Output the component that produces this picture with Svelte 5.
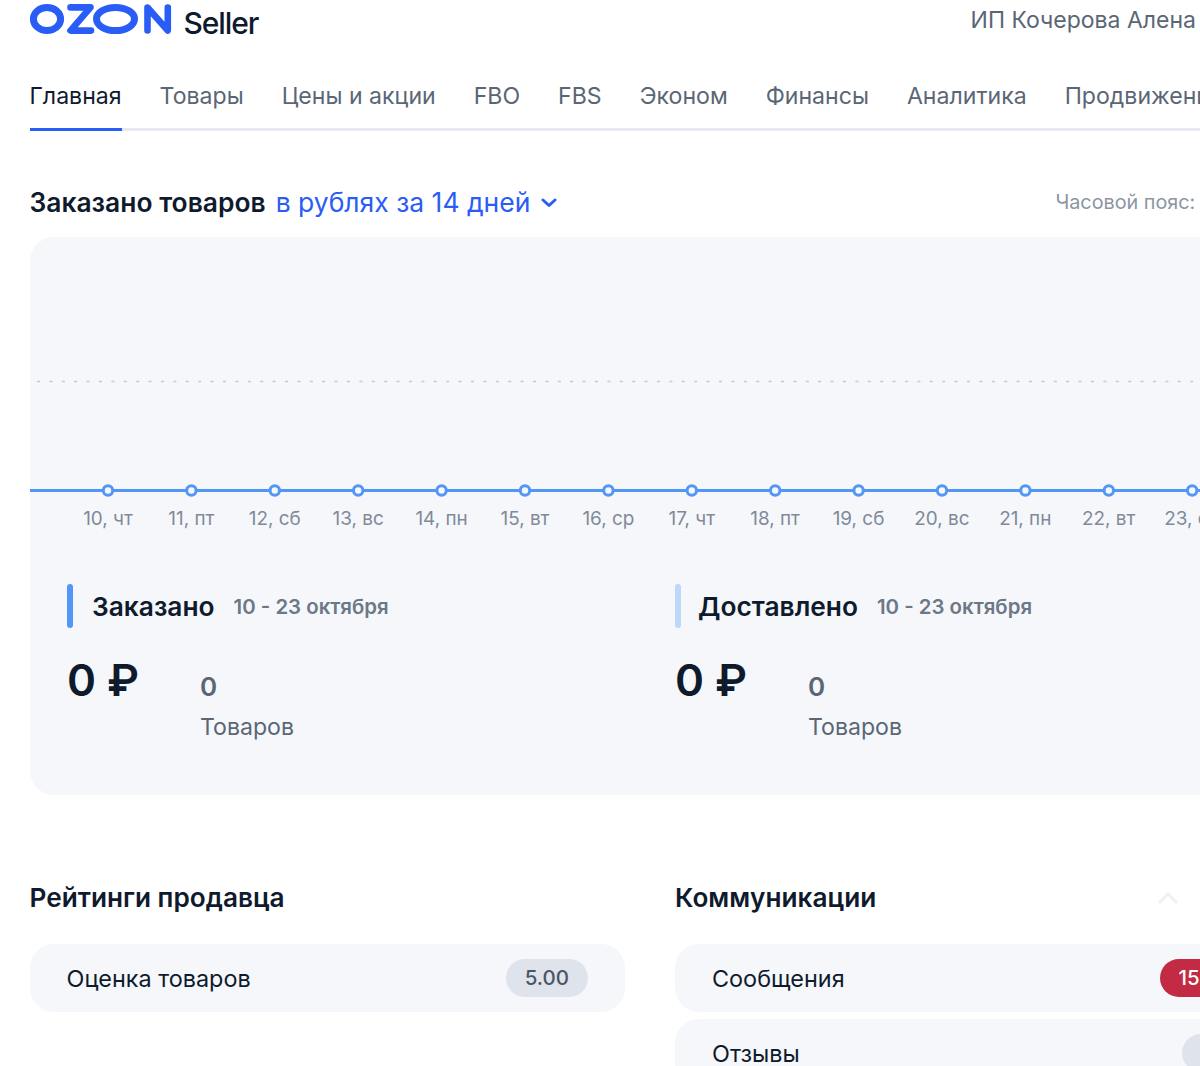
<script>
  const tabs = ['Главная', 'Товары', 'Цены и акции', 'FBO', 'FBS', 'Эконом', 'Финансы', 'Аналитика', 'Продвижение'];
  const days = ['10, чт', '11, пт', '12, сб', '13, вс', '14, пн', '15, вт', '16, ср', '17, чт', '18, пт', '19, сб', '20, вс', '21, пн', '22, вт', '23, ср'];
  const totals = [
    { title: 'Заказано', color: '#5297f5' },
    { title: 'Доставлено', color: '#bcd8fb' }
  ];
  const step = 83.4;
</script>

<div class="page">
  <header class="top">
    <div class="brand">
      <svg class="logo" width="143" height="30" viewBox="0 0 143 30" fill="none" aria-label="OZON">
        <ellipse cx="17" cy="15" rx="13.600" ry="11.500" stroke="#2a5cf6" stroke-width="7" />
        <path d="M40.500 3.400h20L40.500 26.600h20.500" stroke="#2a5cf6" stroke-width="6.600" stroke-linecap="round" stroke-linejoin="round" />
        <ellipse cx="85.500" cy="15" rx="19" ry="11.500" stroke="#2a5cf6" stroke-width="7" />
        <path d="M117.500 26.500V3.500L137.800 26.500V3.500" stroke="#2a5cf6" stroke-width="6.600" stroke-linecap="round" stroke-linejoin="round" />
      </svg>
      <span class="seller">Seller</span>
    </div>
    <span class="user">ИП Кочерова Алена</span>
  </header>

  <nav class="tabs">
    {#each tabs as tab, i}
      <span class="tab" class:active={i === 0}>{tab}</span>
    {/each}
  </nav>

  <div class="heading">
    <h2>Заказано товаров</h2>
    <span class="period">в рублях за 14 дней</span>
    <svg class="chevron" width="16" height="10" viewBox="0 0 16 10" fill="none">
      <path d="M2 2l6 5.500L14 2" stroke="#2a5cf6" stroke-width="3" stroke-linecap="round" stroke-linejoin="round" />
    </svg>
    <span class="tz">Часовой пояс:</span>
  </div>

  <section class="chart-card">
    <svg class="chart" width="1230" height="250" viewBox="0 0 1230 250" fill="none">
      <line x1="7" y1="144.500" x2="1230" y2="144.500" stroke="#c4cad4" stroke-width="1.600" stroke-dasharray="3 9.400" />
      <line x1="0" y1="253.500" x2="1230" y2="253.500" stroke="#5297f5" stroke-width="3" />
      {#each days as _, i}
        <circle cx={78 + i * step} cy="253.500" r="4.700" fill="#f5f7fb" stroke="#5297f5" stroke-width="3" />
      {/each}
    </svg>
    <div class="days">
      {#each days as day}
        <span class="day">{day}</span>
      {/each}
    </div>

    <div class="totals">
      {#each totals as t}
        <div class="total">
          <div class="total-head">
            <i class="mark" style="background:{t.color}"></i>
            <b>{t.title}</b>
            <span class="range">10 - 23 октября</span>
          </div>
          <div class="total-body">
            <span class="sum">0 ₽</span>
            <div class="count">
              <strong>0</strong>
              <span>Товаров</span>
            </div>
          </div>
        </div>
      {/each}
    </div>
  </section>

  <div class="columns">
    <section>
      <h3>Рейтинги продавца</h3>
      <div class="row">
        <span>Оценка товаров</span>
        <em class="pill">5.00</em>
      </div>
    </section>
    <section>
      <div class="col-head">
        <h3>Коммуникации</h3>
        <svg width="20" height="12" viewBox="0 0 20 12" fill="none">
          <path d="M2 10l8-8 8 8" stroke="#edf0f5" stroke-width="3" stroke-linecap="round" stroke-linejoin="round" />
        </svg>
      </div>
      <div class="row">
        <span>Сообщения</span>
        <em class="pill red">15</em>
      </div>
      <div class="row second">
        <span>Отзывы</span>
        <em class="pill">0</em>
      </div>
    </section>
  </div>
</div>

<style>
  :global(body) {
    overflow: hidden;
  }

  .page {
    width: 1200px;
    height: 1066px;
    overflow: hidden;
    box-sizing: border-box;
    padding-left: 29.500px;
    background: #fff;
    color: #0f1b2d;
    font-family: Inter, "Noto Sans", sans-serif;
  }

  .top {
    display: flex;
    justify-content: space-between;
    height: 64px;
    width: 1166.500px;
  }

  .brand {
    display: flex;
    align-items: flex-start;
    margin-top: 4px;
  }

  .seller {
    margin-left: 11px;
    font-size: 30px;
    line-height: 38px;
    font-weight: 500;
    letter-spacing: -1.100px;
  }

  .user {
    font-size: 23px;
    line-height: 40px;
    color: #5a6675;
  }

  .tabs {
    display: flex;
    gap: 38px;
    width: 1300px;
    border-bottom: 3px solid #e6e9f1;
    white-space: nowrap;
  }

  .tab {
    font-size: 23.100px;
    line-height: 64px;
    color: #5a6675;
    margin-bottom: -3px;
    border-bottom: 3px solid transparent;
  }

  .tab.active {
    color: #0f1b2d;
    border-bottom-color: #2a5cf6;
  }

  .heading {
    display: flex;
    align-items: center;
    width: 1300px;
    height: 40px;
    margin-top: 51px;
    white-space: nowrap;
  }

  .heading h2 {
    margin: 0 10px 0 0;
    font-size: 26.400px;
    font-weight: 600;
  }

  .period {
    font-size: 26.500px;
    color: #2a5cf6;
    margin-right: 11px;
  }

  .chevron {
    margin-top: 2px;
  }

  .tz {
    margin-left: 498px;
    font-size: 19.800px;
    color: #8b95a3;
  }

  .chart-card {
    width: 1300px;
    height: 558px;
    margin-top: 15px;
    border-radius: 24px;
    background: #f5f7fb;
    overflow: hidden;
  }

  .chart {
    display: block;
    overflow: visible;
  }

  .days {
    display: flex;
    padding-left: 36.800px;
    margin-top: 20px;
  }

  .day {
    flex: 0 0 83.400px;
    text-align: center;
    font-size: 18.900px;
    line-height: 24px;
    color: #808a98;
  }

  .totals {
    display: flex;
    padding-left: 37.500px;
    margin-top: 53px;
  }

  .total {
    width: 608px;
  }

  .total-head {
    display: flex;
    align-items: center;
    height: 44px;
  }

  .mark {
    width: 6px;
    height: 44px;
    border-radius: 3px;
    margin-right: 19px;
  }

  .total:last-child .mark {
    margin-right: 17px;
  }

  .total-head b {
    font-size: 26.300px;
    font-weight: 600;
    margin-right: 19px;
  }

  .range {
    font-size: 20.400px;
    font-weight: 600;
    color: #6d7886;
  }

  .total-body {
    display: flex;
    margin-top: 22px;
  }

  .sum {
    width: 133px;
    font-size: 44px;
    line-height: 60px;
    font-weight: 600;
  }

  .count {
    display: flex;
    flex-direction: column;
    margin-top: 19px;
    color: #5a6675;
  }

  .count strong {
    font-size: 26px;
    line-height: 36px;
    font-weight: 600;
  }

  .count span {
    font-size: 23.100px;
    line-height: 45px;
  }

  .columns {
    display: flex;
    gap: 50px;
    margin-top: 83px;
    width: 1300px;
  }

  .columns section {
    width: 595.500px;
  }

  .col-head {
    display: flex;
    justify-content: space-between;
    align-items: center;
    width: 503px;
  }

  h3 {
    margin: 0;
    font-size: 26.200px;
    line-height: 40px;
    font-weight: 600;
  }

  .row {
    display: flex;
    justify-content: space-between;
    align-items: center;
    box-sizing: border-box;
    height: 68px;
    margin-top: 26px;
    padding: 0 37px;
    border-radius: 24px;
    background: #f5f7fb;
    font-size: 23.400px;
  }

  .row.second {
    margin-top: 7px;
  }

  .pill {
    padding: 0 19px;
    height: 38px;
    line-height: 38px;
    border-radius: 19px;
    background: #dfe3ec;
    font-style: normal;
    font-size: 20.500px;
    font-weight: 500;
    color: #4a5666;
  }

  .pill.red {
    min-width: 36px;
    background: #c32a44;
    color: #fff;
  }
</style>
